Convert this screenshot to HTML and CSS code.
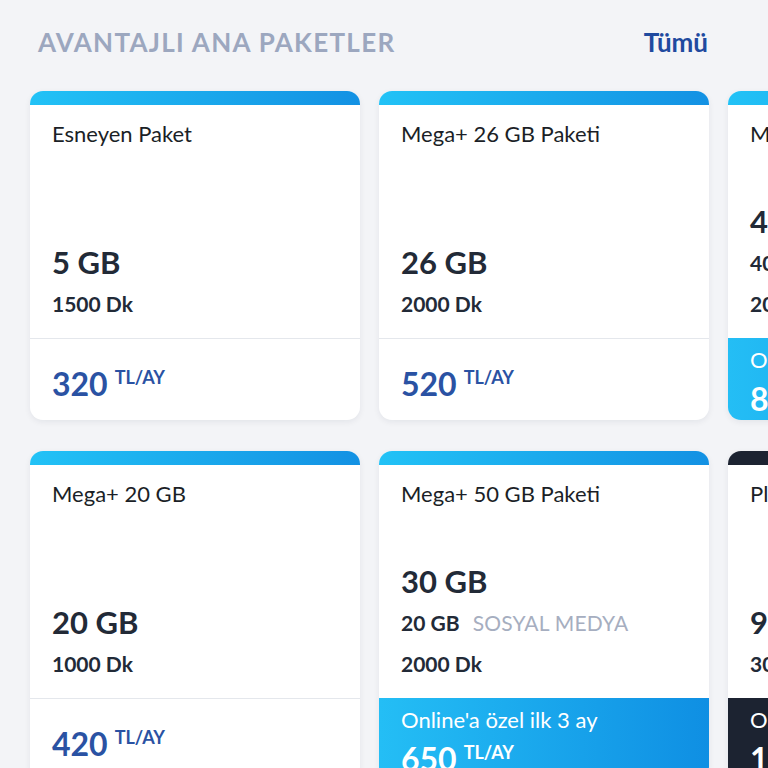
FILE: index.html
```html
<!DOCTYPE html>
<html lang="tr">
<head>
<meta charset="utf-8">
<title>Avantajlı Ana Paketler</title>
<link rel="stylesheet" href="styles.css">
</head>
<body>
<div class="page">
  <div class="header">
    <h2 class="heading">AVANTAJLI ANA PAKETLER</h2>
    <a class="all" href="#">Tümü</a>
  </div>
  <div class="grid">
    <div class="card">
      <div class="bar"></div>
      <div class="body">
        <div class="title">Esneyen Paket</div>
        <div class="data">
          <div class="big">5 GB</div>
          <div class="line">1500 Dk</div>
        </div>
      </div>
      <div class="foot"><span class="price">320</span><span class="unit">TL/AY</span></div>
    </div>
    <div class="card">
      <div class="bar"></div>
      <div class="body">
        <div class="title">Mega+ 26 GB Paketi</div>
        <div class="data">
          <div class="big">26 GB</div>
          <div class="line">2000 Dk</div>
        </div>
      </div>
      <div class="foot"><span class="price">520</span><span class="unit">TL/AY</span></div>
    </div>
    <div class="card">
      <div class="bar"></div>
      <div class="body">
        <div class="title">Mega+ 40 GB Paketi</div>
        <div class="data">
          <div class="big">45 GB</div>
          <div class="line">40 GB <span class="muted">SOSYAL MEDYA</span></div>
          <div class="line">2000 Dk</div>
        </div>
      </div>
      <div class="foot promo"><div class="note">Online'a özel ilk 3 ay</div><div><span class="price">800</span><span class="unit">TL/AY</span></div></div>
    </div>

    <div class="card">
      <div class="bar"></div>
      <div class="body">
        <div class="title">Mega+ 20 GB</div>
        <div class="data">
          <div class="big">20 GB</div>
          <div class="line">1000 Dk</div>
        </div>
      </div>
      <div class="foot"><span class="price">420</span><span class="unit">TL/AY</span></div>
    </div>
    <div class="card">
      <div class="bar"></div>
      <div class="body">
        <div class="title">Mega+ 50 GB Paketi</div>
        <div class="data">
          <div class="big">30 GB</div>
          <div class="line">20 GB <span class="muted">SOSYAL MEDYA</span></div>
          <div class="line">2000 Dk</div>
        </div>
      </div>
      <div class="foot promo"><div class="note">Online'a özel ilk 3 ay</div><div><span class="price">650</span><span class="unit">TL/AY</span></div></div>
    </div>
    <div class="card dark">
      <div class="bar"></div>
      <div class="body">
        <div class="title">Platinum Paket</div>
        <div class="data">
          <div class="big">90 GB</div>
          <div class="line">3000 Dk</div>
        </div>
      </div>
      <div class="foot promo"><div class="note">Online'a özel ilk 3 ay</div><div><span class="price">1.100</span><span class="unit">TL/AY</span></div></div>
    </div>
  </div>
</div>
</body>
</html>
```

FILE: styles.css
```css
html, body {
  margin: 0;
  padding: 0;
  overflow: hidden;
  background: #f3f4f7;
}
body {
  font-family: Lato, "Noto Sans", "Liberation Sans", sans-serif;
  color: #1d2330;
}
.page {
  padding-left: 30px;
  width: 1200px;
}
.header {
  width: 679px;
  height: 84px;
  box-sizing: border-box;
  padding: 0 1px 0 8px;
  display: flex;
  align-items: center;
  justify-content: space-between;
}
.heading {
  margin: 0;
  font-size: 26px;
  font-weight: 700;
  letter-spacing: 1.3px;
  color: #9ca7bf;
}
.all {
  font-size: 26px;
  font-weight: 700;
  color: #1f4a9f;
  text-decoration: none;
}
.grid {
  margin-top: 7px;
  display: grid;
  grid-template-columns: repeat(3, 330px);
  column-gap: 19px;
  row-gap: 31px;
}
.card {
  height: 329px;
  background: #fff;
  border-radius: 13px;
  box-shadow: 0 2px 6px rgba(20, 30, 60, 0.07);
  display: flex;
  flex-direction: column;
  overflow: hidden;
}
.bar {
  height: 14px;
  flex: none;
  background: linear-gradient(90deg, #22c2f6, #1391e3);
}
.body {
  flex: 1;
  display: flex;
  flex-direction: column;
  padding: 17px 22px 14px;
}
.title {
  font-size: 22px;
  line-height: 24px;
  color: #1b1f27;
}
.data {
  margin-top: auto;
}
.big {
  font-size: 31px;
  font-weight: 700;
  line-height: 41px;
  color: #222a37;
}
.line {
  font-size: 21px;
  font-weight: 700;
  line-height: 41px;
  color: #222a37;
}
.muted {
  font-weight: 400;
  color: #a6aec0;
  margin-left: 8px;
  letter-spacing: 0.2px;
}
.foot {
  flex: none;
  height: 82px;
  box-sizing: border-box;
  border-top: 1px solid #e4e7ec;
  padding: 22px 22px 0;
  color: #2a52a3;
  line-height: 32px;
}
.price {
  font-size: 32px;
  font-weight: 700;
}
.unit {
  font-size: 18px;
  font-weight: 700;
  margin-left: 7px;
  vertical-align: 12px;
}
.foot.promo {
  border-top: 0;
  padding-top: 9px;
  color: #fff;
  background: linear-gradient(90deg, #24bef5, #0f8fe3);
}
.note {
  font-size: 22px;
  line-height: 26px;
  margin-bottom: 3px;
}
.dark .bar,
.dark .foot.promo {
  background: #1c2331;
}
```
